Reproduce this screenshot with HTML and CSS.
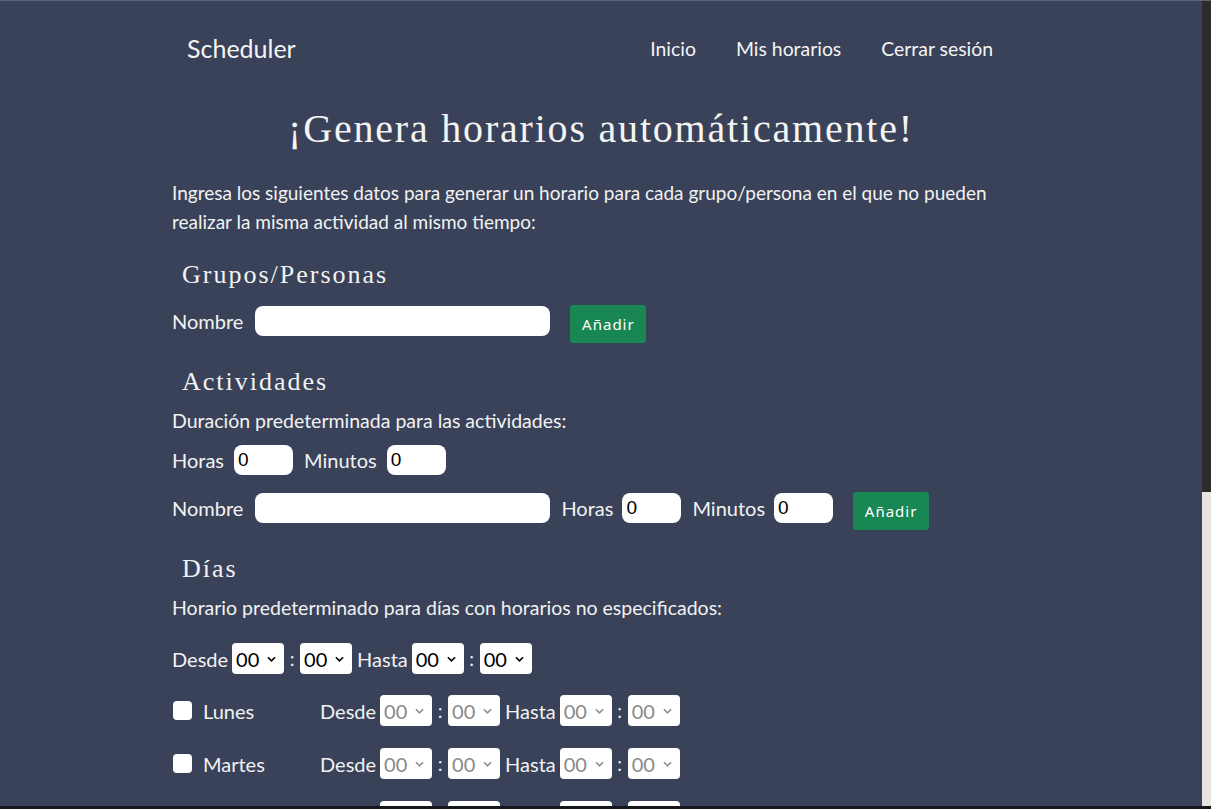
FILE: index.html
```html
<!DOCTYPE html>
<html lang="es">
<head>
<meta charset="utf-8">
<title>Scheduler</title>
<link rel="stylesheet" href="styles.css">
</head>
<body>
<div class="topline"></div>
<div class="window">
  <main class="page">
    <nav class="navbar">
      <a class="brand" href="#">Scheduler</a>
      <ul class="nav-links">
        <li><a href="#">Inicio</a></li>
        <li><a href="#">Mis horarios</a></li>
        <li><a href="#">Cerrar sesión</a></li>
      </ul>
    </nav>
    <div class="container">
      <h1 class="title">¡Genera horarios automáticamente!</h1>
      <p class="intro">Ingresa los siguientes datos para generar un horario para cada grupo/persona en el que no pueden realizar la misma actividad al mismo tiempo:</p>

      <h2 class="section">Grupos/Personas</h2>
      <div class="row row-form row-grupos">
        <label class="lbl">Nombre</label>
        <input class="field field-name" type="text">
        <button class="btn">Añadir</button>
      </div>

      <h2 class="section">Actividades</h2>
      <p class="note">Duración predeterminada para las actividades:</p>
      <div class="row row-form row-dur">
        <label class="lbl">Horas</label>
        <input class="field field-num" type="text" value="0">
        <label class="lbl">Minutos</label>
        <input class="field field-num" type="text" value="0">
      </div>
      <div class="row row-form row-act">
        <label class="lbl">Nombre</label>
        <input class="field field-name" type="text">
        <label class="lbl">Horas</label>
        <input class="field field-num" type="text" value="0">
        <label class="lbl">Minutos</label>
        <input class="field field-num" type="text" value="0">
        <button class="btn">Añadir</button>
      </div>

      <h2 class="section">Días</h2>
      <p class="note">Horario predeterminado para días con horarios no especificados:</p>
      <div class="row row-time row-default">
        <label class="lbl">Desde</label>
        <span class="sel"><select><option>00</option></select><svg viewBox="0 0 10 6"><path d="M1 1l4 4 4-4"/></svg></span>
        <span class="colon">:</span>
        <span class="sel"><select><option>00</option></select><svg viewBox="0 0 10 6"><path d="M1 1l4 4 4-4"/></svg></span>
        <label class="lbl lbl-hasta">Hasta</label>
        <span class="sel"><select><option>00</option></select><svg viewBox="0 0 10 6"><path d="M1 1l4 4 4-4"/></svg></span>
        <span class="colon">:</span>
        <span class="sel"><select><option>00</option></select><svg viewBox="0 0 10 6"><path d="M1 1l4 4 4-4"/></svg></span>
      </div>

      <div class="days">
        <div class="row row-time row-day">
          <label class="day"><input type="checkbox" class="check"><span>Lunes</span></label>
          <label class="lbl">Desde</label>
          <span class="sel off"><select disabled><option>00</option></select><svg viewBox="0 0 10 6"><path d="M1 1l4 4 4-4"/></svg></span>
          <span class="colon">:</span>
          <span class="sel off"><select disabled><option>00</option></select><svg viewBox="0 0 10 6"><path d="M1 1l4 4 4-4"/></svg></span>
          <label class="lbl lbl-hasta">Hasta</label>
          <span class="sel off"><select disabled><option>00</option></select><svg viewBox="0 0 10 6"><path d="M1 1l4 4 4-4"/></svg></span>
          <span class="colon">:</span>
          <span class="sel off"><select disabled><option>00</option></select><svg viewBox="0 0 10 6"><path d="M1 1l4 4 4-4"/></svg></span>
        </div>
        <div class="row row-time row-day">
          <label class="day"><input type="checkbox" class="check"><span>Martes</span></label>
          <label class="lbl">Desde</label>
          <span class="sel off"><select disabled><option>00</option></select><svg viewBox="0 0 10 6"><path d="M1 1l4 4 4-4"/></svg></span>
          <span class="colon">:</span>
          <span class="sel off"><select disabled><option>00</option></select><svg viewBox="0 0 10 6"><path d="M1 1l4 4 4-4"/></svg></span>
          <label class="lbl lbl-hasta">Hasta</label>
          <span class="sel off"><select disabled><option>00</option></select><svg viewBox="0 0 10 6"><path d="M1 1l4 4 4-4"/></svg></span>
          <span class="colon">:</span>
          <span class="sel off"><select disabled><option>00</option></select><svg viewBox="0 0 10 6"><path d="M1 1l4 4 4-4"/></svg></span>
        </div>
        <div class="row row-time row-day">
          <label class="day"><input type="checkbox" class="check"><span>Miércoles</span></label>
          <label class="lbl">Desde</label>
          <span class="sel off"><select disabled><option>00</option></select><svg viewBox="0 0 10 6"><path d="M1 1l4 4 4-4"/></svg></span>
          <span class="colon">:</span>
          <span class="sel off"><select disabled><option>00</option></select><svg viewBox="0 0 10 6"><path d="M1 1l4 4 4-4"/></svg></span>
          <label class="lbl lbl-hasta">Hasta</label>
          <span class="sel off"><select disabled><option>00</option></select><svg viewBox="0 0 10 6"><path d="M1 1l4 4 4-4"/></svg></span>
          <span class="colon">:</span>
          <span class="sel off"><select disabled><option>00</option></select><svg viewBox="0 0 10 6"><path d="M1 1l4 4 4-4"/></svg></span>
        </div>
      </div>
    </div>
  </main>
  <div class="scrollbar"><div class="thumb"></div></div>
</div>
<div class="taskbar"></div>
</body>
</html>
```

FILE: styles.css
```css
* { box-sizing: border-box; }
html, body { margin: 0; padding: 0; height: 100%; overflow: hidden; }
body {
  display: flex;
  flex-direction: column;
  background: #394259;
  color: #f2f2f2;
  font-family: Lato, "Noto Sans", sans-serif;
}
.topline { height: 1px; background: #5b6170; flex: none; }
.taskbar { height: 3px; background: #15161a; flex: none; }
.window { flex: 1; display: flex; min-height: 0; }
.page { flex: 1; overflow: hidden; min-width: 0; }
.scrollbar { width: 9px; flex: none; background: #e8e4e0; display: flex; flex-direction: column; }
.thumb { height: 491px; background: #2b2b2b; }

.navbar {
  height: 96px;
  width: 858px;
  margin: 0 auto;
  display: flex;
  align-items: center;
  justify-content: space-between;
  padding: 0 37px 0 15px;
}
.brand { color: #f4f4f4; text-decoration: none; font-size: 25px; margin-top: -2px; }
.nav-links { list-style: none; margin: -2px 0 0; padding: 0; display: flex; gap: 40px; }
.nav-links a { color: #f4f4f4; text-decoration: none; font-size: 19.4px; }

.container { width: 858px; margin: 0 auto; }
.title {
  font-family: "Liberation Serif", serif;
  font-weight: normal;
  font-size: 40px;
  letter-spacing: 1.8px;
  line-height: 46px;
  text-align: center;
  margin: 9px 0 0;
  color: #f4f4f4;
}
.intro { font-size: 19px; line-height: 29px; margin: 26px 0 0; }
.section {
  font-family: "Liberation Serif", serif;
  font-weight: normal;
  font-size: 26px;
  letter-spacing: 2px;
  line-height: 36px;
  margin: 21px 0 0 10px;
}
.note { font-size: 19.5px; line-height: 29px; margin: 6px 0 0; }

.row { display: flex; align-items: center; }
.row-form { align-items: flex-start; }
.row-grupos { margin-top: 12px; height: 38px; }
.row-dur { margin-top: 9px; height: 30px; }
.row-act { margin-top: 18px; height: 38px; }
.lbl { font-size: 20px; margin-right: 12px; }
.row-form .lbl { line-height: 30px; margin-top: 1px; }
.row-form .field + .lbl { margin-left: 11px; }
.row-dur .lbl { margin-right: 10px; }
.row-act .field + .lbl { margin-right: 9px; }
.field {
  border: none;
  background: #fff;
  border-radius: 8px;
  height: 30px;
  margin-top: 1px;
  font-family: "Liberation Sans", sans-serif;
  font-size: 19px;
  padding: 0 4px;
  color: #000;
  outline: none;
}
.field-name { width: 295px; }
.field-num { width: 59px; }
.btn {
  background: #198754;
  color: #fff;
  border: none;
  border-radius: 3px;
  height: 38px;
  width: 76px;
  padding: 0;
  font-family: "Noto Sans", sans-serif;
  font-size: 15px;
  letter-spacing: 1px;
  margin-left: 20px;
}

.row-time { height: 31px; }
.row-default { margin-top: 21px; }
.days { display: flex; flex-direction: column; gap: 22px; margin-top: 21px; }
.day { width: 148px; display: flex; align-items: center; font-size: 20px; }
.check {
  appearance: none;
  width: 19px;
  height: 19px;
  margin: 0 11px 0 1px;
  background: #fff;
  border-radius: 4px;
}
.sel { position: relative; display: inline-flex; }
.sel select {
  appearance: none;
  width: 52px;
  height: 31px;
  border: none;
  border-radius: 4px;
  background: #fff;
  font-family: Lato, sans-serif;
  font-size: 20px;
  color: #000;
  padding: 0 0 0 4px;
  opacity: 1;
}
.sel svg {
  position: absolute;
  right: 8px;
  top: 13px;
  width: 9px;
  height: 6px;
  fill: none;
  stroke: #000;
  stroke-width: 1.8;
}
.sel.off select { color: #8a8a8a; background: #fff; }
.sel.off svg { stroke: #8f8f8f; }
.colon { font-size: 19px; width: 16px; text-align: center; }
.row-time .lbl { margin-right: 4px; }
.row-time .lbl-hasta { margin-left: 5px; }
```
